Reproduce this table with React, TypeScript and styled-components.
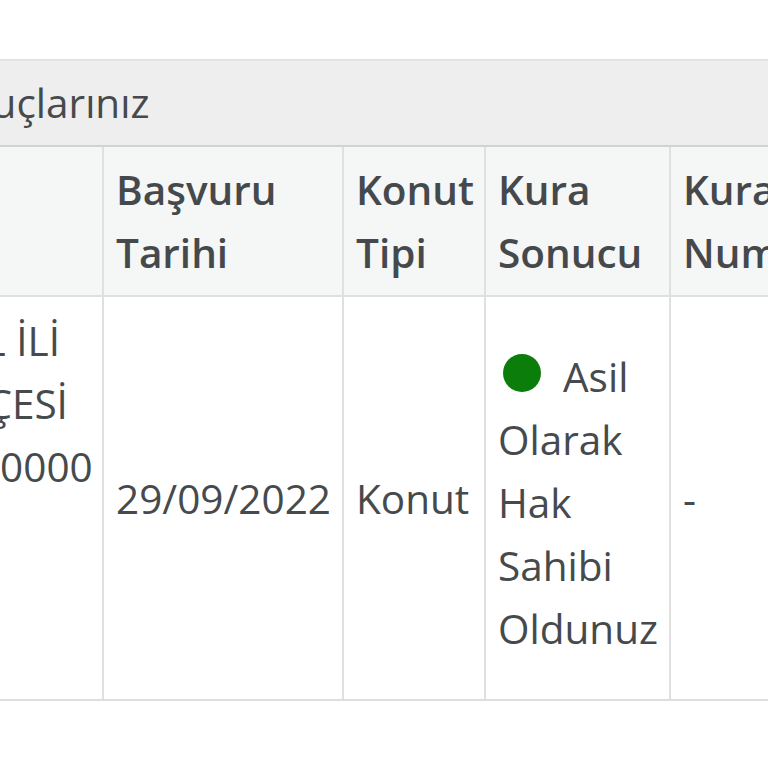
import React from "react";
import styled, { createGlobalStyle } from "styled-components";

const Global = createGlobalStyle`
  html, body { margin: 0; padding: 0; background: #ffffff; }
  body { font-family: "Open Sans", "Liberation Sans", sans-serif; color: #464a4d; overflow: hidden; }
`;

const Page = styled.div`
  width: 768px;
  height: 768px;
  overflow: hidden;
  padding-top: 59px;
  box-sizing: border-box;
`;

const Panel = styled.section`
  margin-left: -197px;
  width: 1116px;
  border-top: 2px solid #e2e2e2;
  border-bottom: 2px solid #dedede;
`;

const Heading = styled.h3`
  margin: 0;
  background: #eeeeee;
  border-bottom: 2px solid #d2d2d2;
  padding: 11px 0 11px 18px;
  font-size: 40.5px;
  line-height: 62px;
  font-weight: 400;
  color: #464a4d;
  white-space: nowrap;
`;

const Table = styled.table`
  border-collapse: collapse;
  table-layout: fixed;
  width: 1116px;
  font-size: 40.5px;
  line-height: 63px;
`;

const Col = styled.col<{ $w: number }>`
  width: ${(p) => p.$w}px;
`;

const Th = styled.th`
  background: #f5f6f6;
  font-weight: 600;
  text-align: left;
  vertical-align: bottom;
  padding: 11px 12px;
  border: 2px solid #e0e0e0;
  border-top: none;
  color: #45494c;
`;

const Td = styled.td`
  vertical-align: middle;
  text-align: left;
  padding: 12px 12px;
  border: 2px solid #e0e0e0;
  border-top: none;
  border-bottom: none;
`;

const Line = styled.span`
  display: block;
  white-space: nowrap;
`;

const Dot = styled.span`
  display: inline-block;
  width: 38px;
  height: 38px;
  border-radius: 50%;
  background: #0a7d0a;
  vertical-align: 0;
  margin: 17px 22px 0 5px;
`;

export default function App() {
  return (
    <Page>
      <Global />
      <Panel>
        <Heading>Kura Sonuçlarınız</Heading>
        <Table>
          <colgroup>
            <Col $w={299} />
            <Col $w={240} />
            <Col $w={142} />
            <Col $w={185} />
            <Col $w={250} />
          </colgroup>
          <thead>
            <tr>
              <Th>Proje</Th>
              <Th>Başvuru Tarihi</Th>
              <Th>Konut Tipi</Th>
              <Th>Kura Sonucu</Th>
              <Th>Kura Numarası</Th>
            </tr>
          </thead>
          <tbody>
            <tr>
              <Td>
                <Line>İSTANBUL İLİ</Line>
                <Line>SİLİVRİ İLÇESİ</Line>
                <Line>1+1, 10000000</Line>
                <Line>TOKİ</Line>
                <Line>KONUT</Line>
                <Line>PROJESİ</Line>
              </Td>
              <Td>29/09/2022</Td>
              <Td>Konut</Td>
              <Td>
                <Dot />Asil Olarak Hak Sahibi Oldunuz
              </Td>
              <Td>-</Td>
            </tr>
          </tbody>
        </Table>
      </Panel>
    </Page>
  );
}
